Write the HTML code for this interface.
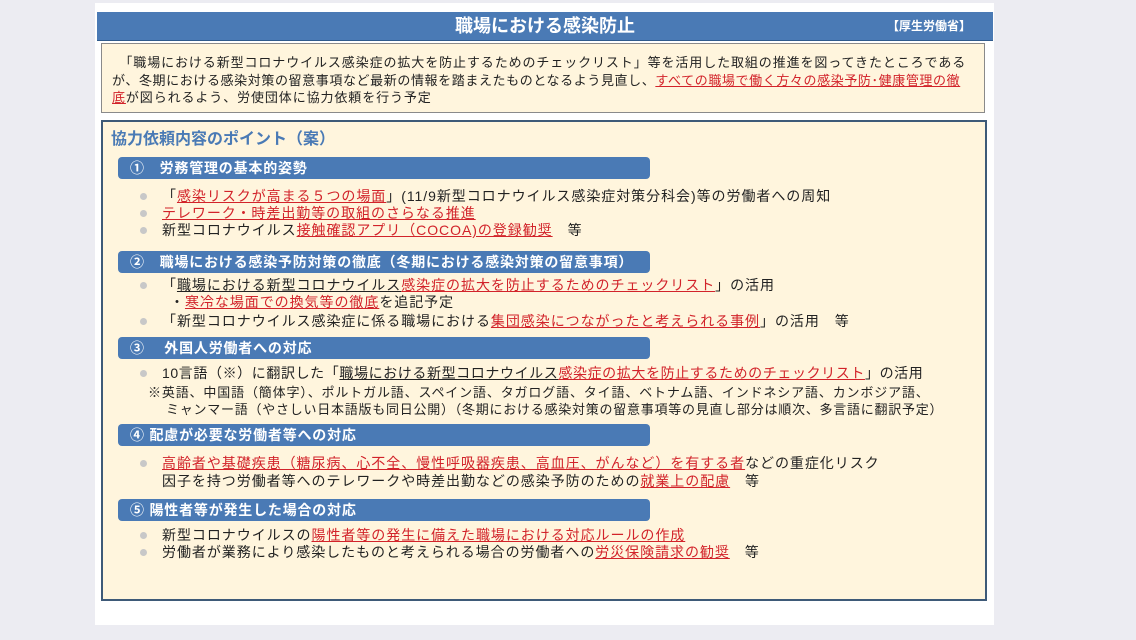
<!DOCTYPE html>
<html><head><meta charset="utf-8"><style>
body{margin:0;width:1136px;height:640px;background:#ececf2;position:relative;overflow:hidden;font-family:"Liberation Sans","Noto Sans CJK JP",sans-serif;color:#222}
.page{position:absolute;left:95px;top:3px;width:899px;height:622px;background:#fff}
.title{position:absolute;left:97px;top:12px;width:896px;height:28px;background:#4a7ab5;border-bottom:1px solid #2f5a8c;color:#fff;font-weight:bold;font-size:18px;line-height:28px;text-align:center}
.title span{position:absolute;right:22px;top:0;font-size:12px}
.top{position:absolute;left:101px;top:43px;width:882px;height:68px;background:#fff5dd;border:1px solid #8a8a8a}
.main{position:absolute;left:101px;top:120px;width:882px;height:477px;background:#fff5dd;border:2px solid #3e5a78}
.l{position:absolute;white-space:nowrap;font-size:14px;line-height:17px;letter-spacing:0.95px}
.r{color:#d2232a;text-decoration:underline}
.u{text-decoration:underline}
.bar{position:absolute;left:118px;width:532px;height:22px;background:#4a7ab5;border-radius:4px;color:#fff;font-weight:bold;font-size:14px;line-height:22px;padding-left:12px;box-sizing:border-box;letter-spacing:0.8px}
.b{position:absolute;left:140px;width:7px;height:7px;border-radius:50%;background:#c8c8c8}
.h{position:absolute;left:111px;top:125px;color:#4a7ab5;font-weight:bold;font-size:16px}
.t{font-size:13px;letter-spacing:0.9px}
</style></head><body>
<div class="page"></div>
<div class="title">職場における感染防止<span>【厚生労働省】</span></div>
<div class="top"></div>
<div class="l t" style="left:112px;top:54px">　「職場における新型コロナウイルス感染症の拡大を防止するためのチェックリスト」等を活用した取組の推進を図ってきたところである</div>
<div class="l t" style="left:112px;top:72px;letter-spacing:0.6px">が、冬期における感染対策の留意事項など最新の情報を踏まえたものとなるよう見直し、<span class="r">すべての職場で働く方々の感染予防･健康管理の徹</span></div>
<div class="l t" style="left:112px;top:89px"><span class="r">底</span>が図られるよう、労使団体に協力依頼を行う予定</div>
<div class="main"></div>
<div class="h">協力依頼内容のポイント（案）</div>

<div class="bar" style="top:157px">①　労務管理の基本的姿勢</div>
<div class="b" style="top:193px"></div><div class="l" style="left:162px;top:188px">「<span class="r">感染リスクが高まる５つの場面</span>」(11/9新型コロナウイルス感染症対策分科会)等の労働者への周知</div>
<div class="b" style="top:210px"></div><div class="l" style="left:162px;top:205px"><span class="r">テレワーク・時差出勤等の取組のさらなる推進</span></div>
<div class="b" style="top:227px"></div><div class="l" style="left:162px;top:222px">新型コロナウイルス<span class="r">接触確認アプリ（COCOA)の登録勧奨</span>　等</div>

<div class="bar" style="top:251px">②　職場における感染予防対策の徹底（冬期における感染対策の留意事項）</div>
<div class="b" style="top:282px"></div><div class="l" style="left:162px;top:277px">「<span class="u">職場における新型コロナウイルス</span><span class="r">感染症の拡大を防止するためのチェックリスト</span>」の活用</div>
<div class="l" style="left:170px;top:294px">・<span class="r">寒冷な場面での換気等の徹底</span>を追記予定</div>
<div class="b" style="top:318px"></div><div class="l" style="left:162px;top:313px">「新型コロナウイルス感染症に係る職場における<span class="r">集団感染につながったと考えられる事例</span>」の活用　等</div>

<div class="bar" style="top:337px">③　 外国人労働者への対応</div>
<div class="b" style="top:370px"></div><div class="l" style="left:162px;top:365px;letter-spacing:0.6px">10言語（※）に翻訳した「<span class="u">職場における新型コロナウイルス</span><span class="r">感染症の拡大を防止するためのチェックリスト</span>」の活用</div>
<div class="l" style="left:148px;top:384px;font-size:13px;letter-spacing:0.85px">※英語、中国語（簡体字）、ポルトガル語、スペイン語、タガログ語、タイ語、ベトナム語、インドネシア語、カンボジア語、</div>
<div class="l" style="left:166px;top:401px;font-size:13px;letter-spacing:0.75px">ミャンマー語（やさしい日本語版も同日公開）（冬期における感染対策の留意事項等の見直し部分は順次、多言語に翻訳予定）</div>

<div class="bar" style="top:424px">④ 配慮が必要な労働者等への対応</div>
<div class="b" style="top:460px"></div><div class="l" style="left:162px;top:455px"><span class="r">高齢者や基礎疾患（糖尿病、心不全、慢性呼吸器疾患、高血圧、がんなど）を有する者</span>などの重症化リスク</div>
<div class="l" style="left:162px;top:473px">因子を持つ労働者等へのテレワークや時差出勤などの感染予防のための<span class="r">就業上の配慮</span>　等</div>

<div class="bar" style="top:499px">⑤ 陽性者等が発生した場合の対応</div>
<div class="b" style="top:532px"></div><div class="l" style="left:162px;top:527px">新型コロナウイルスの<span class="r">陽性者等の発生に備えた職場における対応ルールの作成</span></div>
<div class="b" style="top:549px"></div><div class="l" style="left:162px;top:544px">労働者が業務により感染したものと考えられる場合の労働者への<span class="r">労災保険請求の勧奨</span>　等</div>
</body></html>
